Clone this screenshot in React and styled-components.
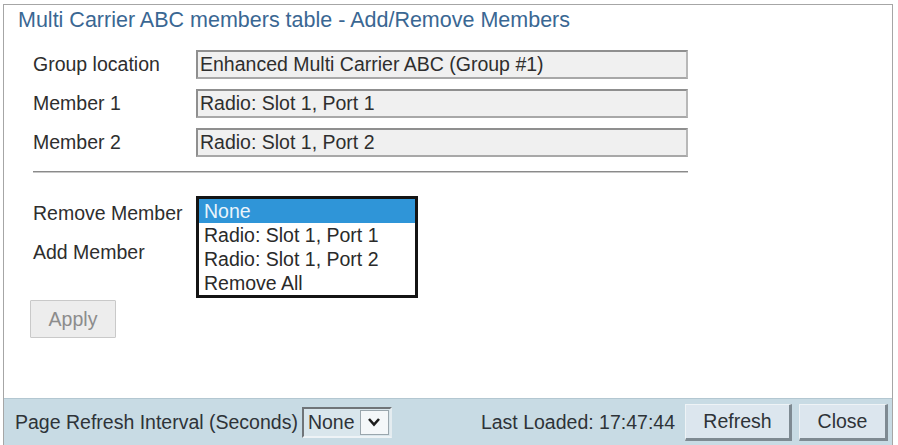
import React from "react";
import styled, { createGlobalStyle } from "styled-components";

const GlobalStyle = createGlobalStyle`
  html, body {
    margin: 0;
    padding: 0;
    background: #ffffff;
  }
  body {
    font-family: "Liberation Sans", Arial, sans-serif;
    color: #2e2e2e;
    overflow: hidden;
  }
`;

const Window = styled.div`
  margin: 4px 5px 0 3px;
  height: 441px;
  border: 1px solid #a6a6a6;
  border-bottom: none;
  box-sizing: border-box;
  display: flex;
  flex-direction: column;
  overflow: hidden;
`;

const Content = styled.div`
  flex: 1;
  padding: 3px 0 0 14px;
`;

const Title = styled.h1`
  margin: 0;
  font-size: 21.5px;
  line-height: 24px;
  font-weight: normal;
  color: #3a6793;
`;

const Form = styled.div`
  margin: 18px 0 0 15px;
  width: 655px;
  display: flex;
  flex-direction: column;
  gap: 10px;
`;

const Row = styled.div`
  display: grid;
  grid-template-columns: 163px 1fr;
  align-items: center;
  height: 29px;
  font-size: 19.5px;
`;

const Label = styled.span`
  white-space: nowrap;
`;

const ReadOnly = styled.div`
  height: 29px;
  box-sizing: border-box;
  padding: 0 2px;
  line-height: 25px;
  background: #f0f0f0;
  border: 2px solid #8f8f8f;
  border-right-color: #b8b8b8;
  border-bottom-color: #a8a8a8;
  white-space: nowrap;
`;

const Separator = styled.hr`
  margin: 4px 0 16px;
  height: 0;
  border: none;
  border-top: 1px solid #8a8a8a;
  border-bottom: 1px solid #c8c8c8;
`;

const SelectSlot = styled.div`
  position: relative;
  width: 222px;
  height: 29px;
`;

const ListBox = styled.ul`
  position: absolute;
  top: -3px;
  left: 0;
  z-index: 2;
  margin: 0;
  padding: 0;
  list-style: none;
  width: 222px;
  box-sizing: border-box;
  border: 3px solid #141414;
  background: #ffffff;
`;

const Option = styled.li`
  height: 24px;
  line-height: 24px;
  padding-left: 5px;
  font-size: 19.5px;
  white-space: nowrap;
  background: ${(p) => (p.selected ? "#2f95d8" : "transparent")};
  color: ${(p) => (p.selected ? "#eaf4fb" : "#2a2a2a")};
`;

const ApplyButton = styled.button`
  margin: 33px 0 0 12px;
  width: 86px;
  height: 38px;
  font-family: inherit;
  font-size: 19.5px;
  color: #8c8c8c;
  background: #ededed;
  border: 1px solid #c9c9c9;
  border-radius: 1px;
`;

const Footer = styled.div`
  height: 47px;
  flex-shrink: 0;
  box-sizing: border-box;
  display: flex;
  align-items: center;
  padding: 0 4px 0 11px;
  background: #c8dbe4;
  border-top: 1px solid #b3c7d1;
  font-size: 19.5px;
  color: #2e3338;
`;

const Spacer = styled.div`
  flex: 1;
`;

const IntervalSelect = styled.div`
  margin-left: 4px;
  width: 90px;
  height: 31px;
  box-sizing: border-box;
  display: flex;
  align-items: center;
  justify-content: space-between;
  padding: 0 1px 0 4px;
  background: #d9e6ec;
  border: 2px solid #6f7478;
  border-right-color: #e4ecf0;
  border-bottom-color: #eef3f6;
`;

const ArrowBox = styled.span`
  width: 29px;
  height: 25px;
  display: flex;
  align-items: center;
  justify-content: center;
  background: #f4f7f9;
  border: 1px solid #9aa6ad;
  box-sizing: border-box;
`;

const LastLoaded = styled.span`
  margin-right: 10px;
`;

const FooterButton = styled.button`
  width: ${(p) => p.width}px;
  height: 37px;
  margin-left: ${(p) => p.gap || 0}px;
  font-family: inherit;
  font-size: 19.5px;
  color: #2e3338;
  background: #dce6ee;
  border: 1px solid #eef3f6;
  border-right: 3px solid #7e8a92;
  border-bottom: 3px solid #7e8a92;
  padding: 0;
`;

const members = [
  { label: "Group location", value: "Enhanced Multi Carrier ABC (Group #1)" },
  { label: "Member 1", value: "Radio: Slot 1, Port 1" },
  { label: "Member 2", value: "Radio: Slot 1, Port 2" },
];

const removeOptions = [
  "None",
  "Radio: Slot 1, Port 1",
  "Radio: Slot 1, Port 2",
  "Remove All",
];

const App = () => {
  return (
    <>
      <GlobalStyle />
      <Window>
        <Content>
          <Title>Multi Carrier ABC members table - Add/Remove Members</Title>
          <Form>
            {members.map((m) => (
              <Row key={m.label}>
                <Label>{m.label}</Label>
                <ReadOnly>{m.value}</ReadOnly>
              </Row>
            ))}
            <Separator />
            <Row>
              <Label>Remove Member</Label>
              <SelectSlot>
                <ListBox>
                  {removeOptions.map((o, i) => (
                    <Option key={o} selected={i === 0}>
                      {o}
                    </Option>
                  ))}
                </ListBox>
              </SelectSlot>
            </Row>
            <Row>
              <Label>Add Member</Label>
              <SelectSlot />
            </Row>
          </Form>
          <ApplyButton disabled>Apply</ApplyButton>
        </Content>
        <Footer>
          <span>Page Refresh Interval (Seconds)</span>
          <IntervalSelect>
            <span>None</span>
            <ArrowBox>
              <svg width="14" height="10" viewBox="0 0 14 10">
                <polyline
                  points="2,2 7,7.5 12,2"
                  fill="none"
                  stroke="#1c1c1c"
                  strokeWidth="2.6"
                />
              </svg>
            </ArrowBox>
          </IntervalSelect>
          <Spacer />
          <LastLoaded>Last Loaded: 17:47:44</LastLoaded>
          <FooterButton width={107}>Refresh</FooterButton>
          <FooterButton width={89} gap={7}>
            Close
          </FooterButton>
        </Footer>
      </Window>
    </>
  );
};

export default App;
